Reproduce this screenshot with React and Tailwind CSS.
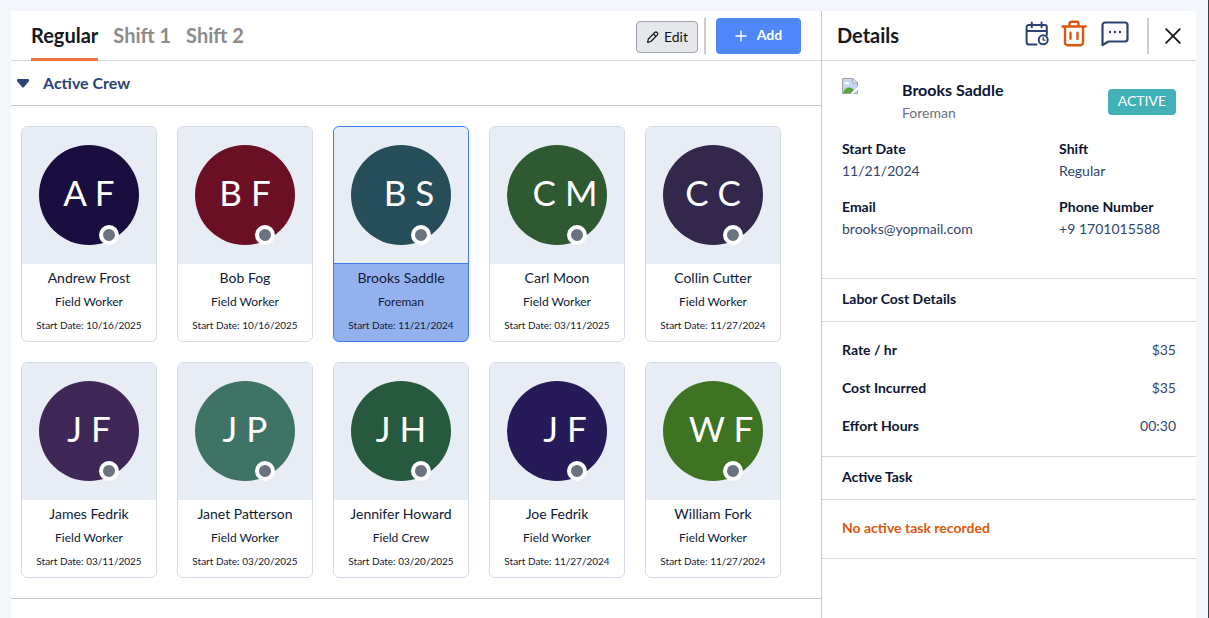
import React from "react";

const crew = [
  { name: "Andrew Frost", initials: "A F", role: "Field Worker", date: "10/16/2025", color: "bg-[#190e3f]" },
  { name: "Bob Fog", initials: "B F", role: "Field Worker", date: "10/16/2025", color: "bg-[#6b0f24]" },
  { name: "Brooks Saddle", initials: "B S", role: "Foreman", date: "11/21/2024", color: "bg-[#254d5a]", photo: true, selected: true },
  { name: "Carl Moon", initials: "C M", role: "Field Worker", date: "03/11/2025", color: "bg-[#2e5931]", photo: true },
  { name: "Collin Cutter", initials: "C C", role: "Field Worker", date: "11/27/2024", color: "bg-[#33284c]" },
  { name: "James Fedrik", initials: "J F", role: "Field Worker", date: "03/11/2025", color: "bg-[#3f2858]" },
  { name: "Janet Patterson", initials: "J P", role: "Field Worker", date: "03/20/2025", color: "bg-[#3f7366]" },
  { name: "Jennifer Howard", initials: "J H", role: "Field Crew", date: "03/20/2025", color: "bg-[#26593d]" },
  { name: "Joe Fedrik", initials: "J F", role: "Field Worker", date: "11/27/2024", color: "bg-[#261b58]", photo: true },
  { name: "William Fork", initials: "W F", role: "Field Worker", date: "11/27/2024", color: "bg-[#3d7322]", photo: true },
];

function CrewCard({ member }) {
  const { name, initials, role, date, color, photo, selected } = member;
  return (
    <button
      type="button"
      aria-pressed={Boolean(selected)}
      className={`flex w-[136px] flex-col overflow-hidden rounded-md border text-center ${
        selected ? "border-[#3f7de8] bg-[#94b1ef]" : "border-[#d2dce8] bg-white"
      }`}
    >
      <span
        className={`flex h-[137px] w-full justify-center border-b pt-[18px] ${
          selected ? "border-[#3f7de8] bg-[#e7ecf5]" : "border-[#e7ecf5] bg-[#e7ecf5]"
        }`}
      >
        <span className={`relative flex size-[100px] items-center justify-center rounded-full pb-1.5 text-[35px] text-white ${color} ${photo ? "pl-4" : ""}`}>
          {initials}
          <span className="absolute bottom-0 left-[60px] size-5 rounded-full border-4 border-white bg-[#6b7280]" />
        </span>
      </span>
      <span className="flex w-full flex-col items-center text-[#0f1a36]">
        <span className="pt-1 text-sm leading-5">{name}</span>
        <span className="pt-1 text-xs leading-5">{role}</span>
        <span className="pt-1 pb-1.5 text-[10px] leading-[19px]">Start Date: {date}</span>
      </span>
    </button>
  );
}

function PencilIcon() {
  return (
    <svg width="14" height="14" viewBox="0 0 14 14" fill="none" stroke="currentColor" strokeWidth="1.2" strokeLinejoin="round" aria-hidden="true">
      <path d="M1.600 12.400 2.300 9 8.600 2.700c.8-.8 1.900-.8 2.600-.1s.8 1.800 0 2.600L4.900 11.500Z" />
      <path d="m7.400 4 2.500 2.500" />
    </svg>
  );
}

function CalendarClockIcon() {
  return (
    <svg width="24" height="26" viewBox="0 0 24 26" fill="none" stroke="currentColor" strokeWidth="2" strokeLinecap="round" strokeLinejoin="round" aria-hidden="true">
      <path d="M11.500 23.500H4.200a2.600 2.600 0 0 1-2.600-2.600V6a2 2 0 0 1 2-2h16.200a2 2 0 0 1 2 2v8M1.600 10h20.200M6.800 1.500v4.700M16.600 1.500v4.700" />
      <circle cx="18.200" cy="18.800" r="4.500" />
      <path d="M18.200 16.600v2.500h1.800" strokeWidth="1.400" />
    </svg>
  );
}

function TrashIcon() {
  return (
    <svg width="26" height="28" viewBox="0 0 26 28" fill="none" stroke="currentColor" strokeWidth="2.400" strokeLinecap="round" strokeLinejoin="round" aria-hidden="true">
      <path d="M1.500 6.500h23M8.500 6V3.700a2 2 0 0 1 2-2h5a2 2 0 0 1 2 2V6M4 7v15.700a2.500 2.500 0 0 0 2.500 2.500h13a2.500 2.500 0 0 0 2.500-2.500V7" />
      <path d="M9.500 12.800v6M16.500 12.800v6" />
    </svg>
  );
}

function ChatIcon() {
  return (
    <svg width="28" height="26" viewBox="0 0 28 26" fill="none" stroke="currentColor" strokeWidth="2.200" strokeLinejoin="round" aria-hidden="true">
      <path d="M1.500 24V4A2.500 2.500 0 0 1 4 1.500h20A2.500 2.500 0 0 1 26.500 4v14a2.500 2.500 0 0 1-2.500 2.500H7.500Z" />
      <g fill="currentColor" stroke="none">
        <circle cx="9" cy="11" r="1.200" />
        <circle cx="14" cy="11" r="1.200" />
        <circle cx="19" cy="11" r="1.200" />
      </g>
    </svg>
  );
}

function CloseIcon() {
  return (
    <svg width="16" height="16" viewBox="0 0 16 16" fill="none" stroke="currentColor" strokeWidth="1.800" strokeLinecap="round" aria-hidden="true">
      <path d="m1.200 1.200 13.600 13.600M14.800 1.200 1.200 14.800" />
    </svg>
  );
}

function MissingPhoto() {
  return (
    <svg width="16" height="16" viewBox="0 0 16 16" role="img" aria-label="Photo unavailable">
      <path d="M.5.500h10.500l4.500 4.500v10.500H.5Z" fill="#c3d5f7" stroke="#a3a3a3" />
      <path d="M2.300 5.800c0-1 .8-1.400 1.500-1.300.4-1.200 2.200-1.200 2.600 0 1.200 0 1.500 1.500.3 1.700H2.700Z" fill="#fff" />
      <path d="M1 15c1-3.500 3.500-5.500 6-5.500s3.800 1.300 5 2L9 15Z" fill="#57a639" />
      <path d="M11 .5V5h4.500Z" fill="#fff" stroke="#a3a3a3" />
      <path d="M16 8.500 8.500 16H11l5-4.500Z" fill="#fff" />
    </svg>
  );
}

function Field({ label, value }) {
  return (
    <div>
      <dt className="text-sm leading-[22px] font-bold text-[#0b1533]">{label}</dt>
      <dd className="text-sm leading-[22px] text-[#33456e]">{value}</dd>
    </div>
  );
}

function CostRow({ label, value }) {
  return (
    <div className="flex justify-between text-sm leading-[22px]">
      <dt className="font-bold text-[#0b1533]">{label}</dt>
      <dd className="text-[#33456e]">{value}</dd>
    </div>
  );
}

export default function App() {
  return (
    <div className="flex min-h-screen border-r border-[#3c3f43] bg-[#f3f7fb] pt-[11px] pr-3 pl-[11px] font-['Lato',sans-serif]">
      <main className="min-w-0 flex-1 border-r border-[#c8c8c8] bg-white">
        <header className="flex h-[50px] items-stretch justify-between border-b border-[#d8d8d8] px-5">
          <nav className="-mb-px flex gap-[15px] text-xl font-bold">
            <button type="button" className="border-b-3 border-[#ea7740] text-[#16181d]">Regular</button>
            <button type="button" className="border-b-3 border-transparent text-[#8b8b8b]">Shift 1</button>
            <button type="button" className="border-b-3 border-transparent text-[#8b8b8b]">Shift 2</button>
          </nav>
          <div className="flex items-center">
            <button type="button" className="mt-0.5 flex h-8 w-[62px] items-center justify-center gap-1 rounded-sm border border-[#9ca3af] bg-[#e5e7eb] text-sm text-[#111418]">
              <PencilIcon />
              Edit
            </button>
            <span className="mr-2.5 ml-1.5 h-9 w-0.5 bg-[#cbcbcb]" />
            <button type="button" className="flex h-9 w-[85px] items-center justify-center gap-2.5 rounded-sm bg-[#4f87fa] pb-0.5 text-sm font-bold text-white">
              <svg className="mt-0.5" width="12" height="12" viewBox="0 0 12 12" stroke="currentColor" strokeWidth="1.300" aria-hidden="true">
                <path d="M6 .5v11M.5 6h11" />
              </svg>
              Add
            </button>
          </div>
        </header>

        <h2 className="border-b border-[#c8c8c8] text-base font-bold text-[#2d4270]">
          <button type="button" aria-expanded="true" className="flex h-11 w-full items-center gap-3.5 pl-1.5">
            <svg width="12" height="10" viewBox="0 0 12 10" fill="currentColor" aria-hidden="true">
              <path d="M1 1h10q1 0 1 1v1L7 9Q6 10 5 9L0 3V2Q0 1 1 1Z" />
            </svg>
            Active Crew
          </button>
        </h2>

        <section className="flex flex-wrap gap-5 border-b border-[#c8c8c8] px-2.5 py-5">
          {crew.map((member) => (
            <CrewCard key={member.name} member={member} />
          ))}
        </section>
      </main>

      <aside className="w-[374px] shrink-0 bg-white">
        <header className="flex h-[50px] items-center justify-between border-b border-[#d8d8d8] px-[15px]">
          <h2 className="pb-0.5 text-xl font-bold text-[#16181d]">Details</h2>
          <div className="flex items-center">
            <div className="flex items-center gap-3 pb-1">
              <button type="button" aria-label="Schedule" className="text-[#2d4270]"><CalendarClockIcon /></button>
              <button type="button" aria-label="Delete" className="text-[#d9580d]"><TrashIcon /></button>
              <button type="button" aria-label="Message" className="ml-0.5 text-[#2d4270]"><ChatIcon /></button>
            </div>
            <span className="mr-4 ml-[18px] h-9 w-0.5 bg-[#cbcbcb]" />
            <button type="button" aria-label="Close" className="text-[#16181d]"><CloseIcon /></button>
          </div>
        </header>

        <section className="border-b border-[#d8d8d8] px-5 pt-[17px] pb-[38px]">
          <div className="flex">
            <div className="w-[60px]"><MissingPhoto /></div>
            <div className="flex-1">
              <h3 className="text-base leading-6 font-bold text-[#0b1533]">Brooks Saddle</h3>
              <p className="text-sm leading-[22px] text-[#6b7280]">Foreman</p>
            </div>
            <span className="mt-[11px] h-[26px] rounded-sm bg-[#41b0b7] px-2.5 text-sm leading-6 text-white">ACTIVE</span>
          </div>
          <dl className="grid grid-cols-[65%_35%] gap-y-3.5 pt-3.5">
            <Field label="Start Date" value="11/21/2024" />
            <Field label="Shift" value="Regular" />
            <Field label="Email" value="brooks@yopmail.com" />
            <Field label="Phone Number" value="+9 1701015588" />
          </dl>
        </section>

        <h3 className="border-b border-[#d8d8d8] px-5 pt-2.5 pb-3 text-sm leading-5 font-bold text-[#0b1533]">Labor Cost Details</h3>
        <dl className="flex flex-col gap-4 border-b border-[#d8d8d8] px-5 pt-[17px] pb-[19px]">
          <CostRow label="Rate / hr" value="$35" />
          <CostRow label="Cost Incurred" value="$35" />
          <CostRow label="Effort Hours" value="00:30" />
        </dl>
        <h3 className="border-b border-[#d8d8d8] px-5 pt-2.5 pb-3 text-sm leading-5 font-bold text-[#0b1533]">Active Task</h3>
        <p className="border-b border-[#d8d8d8] px-5 pt-[18px] pb-5 text-sm leading-5 font-bold text-[#d9580d]">No active task recorded</p>
      </aside>
    </div>
  );
}
